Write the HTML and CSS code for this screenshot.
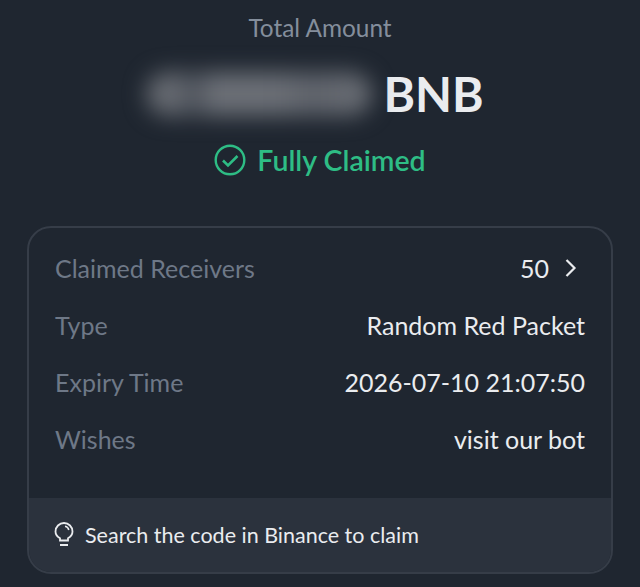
FILE: index.html
```html
<!DOCTYPE html>
<html lang="en">
<head>
  <meta charset="UTF-8" />
  <title>Red Packet</title>
  <link rel="stylesheet" href="styles.css">
</head>
<body>
  <div class="summary">
    <div class="total-label">Total Amount</div>
    <div class="amount">
      <div class="blur"></div>
      <span class="coin">BNB</span>
    </div>
    <div class="status">
      <svg class="status-icon" width="32" height="32" viewBox="0 0 32 32" fill="none">
        <circle cx="16" cy="16" r="14.300" stroke="#2ebd85" stroke-width="2.400"/>
        <path d="M9 16.500l5 5 9.500-9.500" stroke="#2ebd85" stroke-width="2.600"/>
      </svg>
      <span>Fully Claimed</span>
    </div>
  </div>

  <div class="card">
    <div class="rows">
      <div class="row">
        <span class="key">Claimed Receivers</span>
        <span class="val">50
          <svg class="chevron" width="12" height="18" viewBox="0 0 12 18" fill="none">
            <path d="M1.500 1l8 8-8 8" stroke="#eaecef" stroke-width="2.200"/>
          </svg>
        </span>
      </div>
      <div class="row">
        <span class="key">Type</span>
        <span class="val">Random Red Packet</span>
      </div>
      <div class="row">
        <span class="key">Expiry Time</span>
        <span class="val">2026-07-10 21:07:50</span>
      </div>
      <div class="row">
        <span class="key">Wishes</span>
        <span class="val">visit our bot</span>
      </div>
    </div>
    <div class="hint">
      <svg width="20" height="26" viewBox="0 0 20 26" fill="none">
        <path d="M6 18.500v-2.200C3.400 14.800 1.500 12.300 1.500 9.500a8.500 8.500 0 0 1 17 0c0 2.800-1.900 5.300-4.500 6.800v2.200z" stroke="#eaecef" stroke-width="1.800"/>
        <path d="M11 4.200c2 .4 3.400 1.800 3.800 3.800" stroke="#eaecef" stroke-width="1.500"/>
        <path d="M6 23h8" stroke="#eaecef" stroke-width="2.200"/>
      </svg>
      <span>Search the code in Binance to claim</span>
    </div>
  </div>
</body>
</html>
```

FILE: styles.css
```css
* {
  margin: 0;
  padding: 0;
  box-sizing: border-box;
}

html, body {
  height: 100%;
  overflow: hidden;
}

body {
  background: #1f2630;
  font-family: "Lato", "Liberation Sans", sans-serif;
  color: #eaecef;
}

.summary {
  height: 226px;
  display: flex;
  flex-direction: column;
  align-items: center;
  padding-top: 13px;
}

.total-label {
  font-size: 24.400px;
  line-height: 30px;
  color: #848e9c;
}

.amount {
  display: flex;
  align-items: center;
  gap: 11px;
  margin-top: 16px;
  height: 70px;
  padding-right: 10px;
}

.blur {
  width: 226px;
  height: 44px;
  border-radius: 22px;
  background: linear-gradient(90deg, #666a71 0, #666a71 14%, #4a4f58 20%, #6c7077 30%, #6a6e75 60%, #5f636b 72%, #6a6e75 100%);
  filter: blur(11px);
}

.coin {
  font-size: 48px;
  font-weight: 700;
  line-height: 70px;
}

.status {
  display: flex;
  align-items: center;
  gap: 11px;
  margin-top: 13px;
  font-size: 28.500px;
  line-height: 36px;
  font-weight: 600;
  color: #2ebd85;
}

.card {
  margin: 0 27px;
  height: 348px;
  border: 2px solid #363d48;
  border-radius: 24px;
  overflow: hidden;
  display: flex;
  flex-direction: column;
}

.rows {
  flex: 1;
  padding: 11px 26px 0;
}

.row {
  display: flex;
  justify-content: space-between;
  align-items: center;
  height: 57px;
  font-size: 25px;
}

.key {
  color: #6e7887;
}

.val {
  display: flex;
  align-items: center;
  gap: 16px;
}

.chevron {
  margin-right: 8px;
}

.hint {
  height: 74px;
  background: #2b323d;
  display: flex;
  align-items: center;
  gap: 11px;
  padding-left: 25px;
  font-size: 21.500px;
}
```
